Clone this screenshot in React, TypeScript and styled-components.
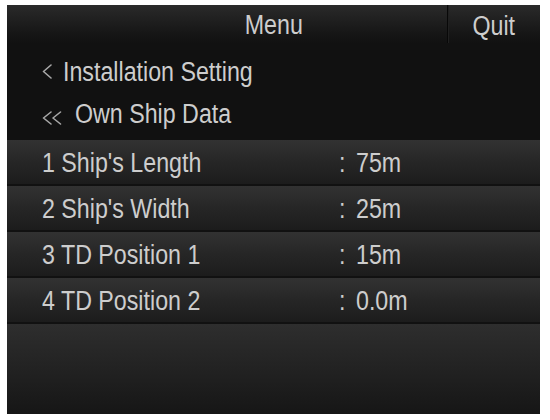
import React from "react";
import styled, { createGlobalStyle } from "styled-components";

const Global = createGlobalStyle`
  html, body { margin: 0; padding: 0; background: #ffffff; }
  body { font-family: "Liberation Sans", Arial, sans-serif; }
`;

const Screen = styled.div`
  margin: 5px 0 0 7px;
  width: 533px;
  height: 409px;
  display: flex;
  flex-direction: column;
  background: #111111;
  color: #cdcdcd;
  font-size: 27px;
  overflow: hidden;
`;

/* condensed face: the device font is a narrow sans */
const Text = styled.span<{ $origin?: string }>`
  display: inline-block;
  white-space: pre;
  transform: scaleX(0.86);
  transform-origin: ${(p) => p.$origin ?? "left"} center;
`;

const Header = styled.header`
  height: 38px;
  flex: none;
  display: grid;
  grid-template-columns: 93px 1fr 93px;
  background: linear-gradient(#2a2a2a, #161616 75%, #111111);
`;

const Title = styled.div`
  grid-column: 2;
  text-align: center;
  padding-top: 3px;
  line-height: 34px;
`;

const QuitButton = styled.button`
  all: unset;
  grid-column: 3;
  text-align: center;
  padding-top: 3px;
  line-height: 34px;
  font-family: inherit;
  font-size: 27px;
  color: #cdcdcd;
  border-left: 1px solid #080808;
  box-shadow: inset 1px 0 0 #202020;
`;

const Nav = styled.nav`
  flex: none;
  padding: 8px 0 5px 35px;
`;

const NavLine = styled.div<{ $gap: number }>`
  height: 42px;
  line-height: 42px;
  display: flex;
  align-items: center;
  gap: ${(p) => p.$gap}px;
`;

const Chevron = styled.svg<{ $shift: number }>`
  flex: none;
  margin-top: ${(p) => p.$shift}px;
  fill: none;
  stroke: #a8a8a8;
  stroke-width: 1.6;
  stroke-linecap: round;
  stroke-linejoin: round;
`;

const List = styled.div`
  flex: none;
  display: flex;
  flex-direction: column;
`;

const Row = styled.div`
  height: 46px;
  box-sizing: border-box;
  padding: 4px 0 0 35px;
  line-height: 38px;
  display: grid;
  grid-template-columns: 287.5px auto 1fr;
  column-gap: 9.5px;
  background: linear-gradient(#323232, #262626 50%, #1c1c1c);
  border-bottom: 2px solid #111111;
`;

const Filler = styled.div`
  flex: 1;
  background: linear-gradient(#2e2e2e, #222222 50%, #161616);
`;

const rows = [
  { n: 1, label: "Ship's Length", value: "75m" },
  { n: 2, label: "Ship's Width", value: "25m" },
  { n: 3, label: "TD Position 1", value: "15m" },
  { n: 4, label: "TD Position 2", value: "0.0m" },
];

export default function App() {
  return (
    <>
      <Global />
      <Screen>
        <Header>
          <Title>
            <Text $origin="center">Menu</Text>
          </Title>
          <QuitButton>
            <Text $origin="center">Quit</Text>
          </QuitButton>
        </Header>
        <Nav>
          <NavLine $gap={11}>
            <Chevron $shift={-1} width="10" height="15" viewBox="0 0 10 15">
              <polyline points="9,1 1.5,7.5 9,14" />
            </Chevron>
            <Text>Installation Setting</Text>
          </NavLine>
          <NavLine $gap={13}>
            <Chevron $shift={7} width="20" height="14" viewBox="0 0 20 14">
              <polyline points="9,1 1.5,7 9,13" />
              <polyline points="18.5,1 11,7 18.5,13" />
            </Chevron>
            <Text>Own Ship Data</Text>
          </NavLine>
        </Nav>
        <List>
          {rows.map((r) => (
            <Row key={r.n}>
              <Text>{`${r.n} ${r.label}`}</Text>
              <Text>:</Text>
              <Text>{r.value}</Text>
            </Row>
          ))}
        </List>
        <Filler />
      </Screen>
    </>
  );
}
